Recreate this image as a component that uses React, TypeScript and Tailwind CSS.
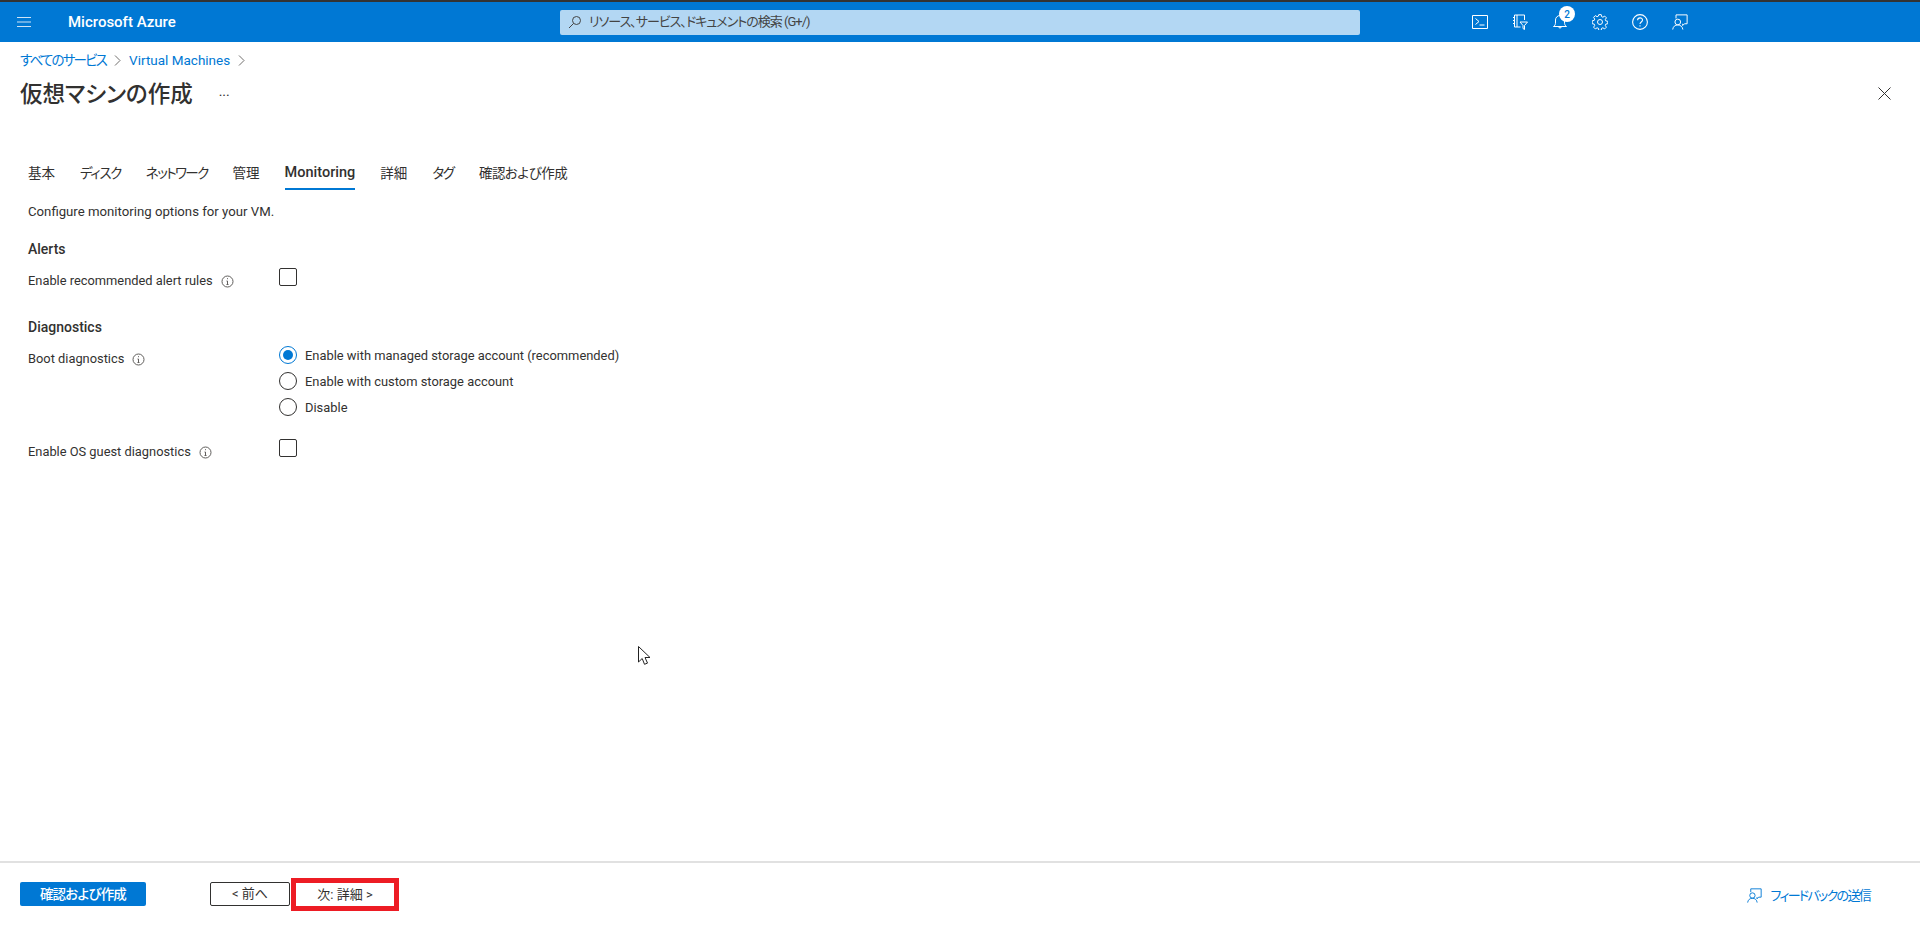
import React from "react";

const font = { fontFamily: '"Roboto", "Noto Sans CJK JP", sans-serif' };

function Info() {
  return (
    <svg width="13" height="13" viewBox="0 0 13 13" fill="none" stroke="#605e5c" strokeWidth="1">
      <circle cx="6.5" cy="6.5" r="5.5" />
      <path d="M6.5 6v3.5M5.5 9.5h2M5.5 6h1" />
      <path d="M6.5 3.2v1" />
    </svg>
  );
}

function Feedback({ color, size }: { color: string; size: number }) {
  return (
    <svg width={size} height={size} viewBox="0 0 18 18" fill="none" stroke={color} strokeWidth="1.1">
      <path d="M4.5 5V1h12.5v10h-3l-2 2v-2" />
      <circle cx="6.5" cy="9" r="3.2" />
      <path d="M0.8 17.5c.3-3.2 2.6-5.2 5.7-5.2s5.400 2 5.700 5.200" />
    </svg>
  );
}

function Checkbox() {
  return <div className="-ml-[1px] h-[18px] w-[18px] rounded-[2px] border border-[#323130] bg-white" />;
}

function Radio({ checked, label }: { checked?: boolean; label: string }) {
  return (
    <div className="flex h-[18px] items-center gap-[8px]">
      <div
        className={
          checked
            ? "flex h-[18px] w-[18px] items-center justify-center rounded-full border border-[#0078d4]"
            : "flex h-[18px] w-[18px] items-center justify-center rounded-full border border-[#323130]"
        }
      >
        {checked && <div className="h-[10px] w-[10px] rounded-full bg-[#0078d4]" />}
      </div>
      <span className="mt-[2px] whitespace-nowrap text-[12.9px] leading-5 text-[#323130]">{label}</span>
    </div>
  );
}

function Label({ text }: { text: string }) {
  return (
    <div className="flex h-5 w-[252px] items-center gap-[8px] text-[12.85px] leading-5 text-[#323130]">
      <span className="whitespace-nowrap">{text}</span>
      <Info />
    </div>
  );
}

const tabs = [
  { t: "基本", c: "whitespace-nowrap pb-[6px] text-[13.5px] leading-5 text-[#323130]" },
  { t: "ディスク", c: "whitespace-nowrap pb-[6px] text-[13.5px] leading-5 text-[#323130] tracking-[-1.4px]" },
  { t: "ネットワーク", c: "whitespace-nowrap pb-[6px] text-[13.5px] leading-5 text-[#323130] tracking-[-1.6px]" },
  { t: "管理", c: "whitespace-nowrap pb-[6px] text-[13.5px] leading-5 text-[#323130]" },
  { t: "Monitoring", c: "whitespace-nowrap border-b-2 border-[#0078d4] pb-[5px] text-[14.5px] font-medium leading-5 text-[#323130]" },
  { t: "詳細", c: "whitespace-nowrap pb-[6px] text-[13.5px] leading-5 text-[#323130]" },
  { t: "タグ", c: "whitespace-nowrap pb-[6px] text-[13.5px] leading-5 text-[#323130] tracking-[-1.2px]" },
  { t: "確認および作成", c: "whitespace-nowrap pb-[6px] text-[13.5px] leading-5 text-[#323130] tracking-[-0.5px]" },
];

export default function App() {
  return (
    <div className="flex h-[931px] w-[1920px] flex-col overflow-hidden bg-white [font-feature-settings:'palt']" style={font}>
      <div className="h-[2px] bg-[#333333]" />
      <header className="flex h-10 items-center bg-[#0078d4] text-white">
        <svg className="ml-[17px]" width="14" height="12" viewBox="0 0 14 12" fill="none" stroke="#cfe4f6" strokeWidth="1.2">
          <path d="M0 1.500h14M0 6h14M0 10.500h14" />
        </svg>
        <span className="ml-[37px] w-[492px] whitespace-nowrap text-[15px] font-medium leading-5">Microsoft Azure</span>
        <div className="flex h-[25px] w-[800px] items-center rounded-[2px] bg-[#b3d7f3] pl-2 text-[13px] text-[#444]">
          <svg width="14" height="14" viewBox="0 0 14 14" fill="none" stroke="#444" strokeWidth="1">
            <circle cx="8.500" cy="5.500" r="4" />
            <path d="M5.500 8.500 1 13" />
          </svg>
          <span className="ml-[7px] whitespace-nowrap tracking-[-1px]">リソース、サービス、ドキュメントの検索 (G+/)</span>
        </div>
        <div className="ml-[112px] flex items-center gap-[24px]">
          <svg width="16" height="16" viewBox="0 0 16 16" fill="none" stroke="white" strokeWidth="1">
            <path d="M.5 1.500h15v13H.5z" />
            <path d="M3.500 4.500l3.500 3-3.500 3M7.500 11h5" />
          </svg>
          <svg width="16" height="16" viewBox="0 0 16 16" fill="none" stroke="white" strokeWidth="1">
            <path d="M2.500 13V1h10v5M2.500 13h6M5 1v12M1 3.500h1.500M1 6.500h1.500M1 9.500h1.500" />
            <path d="M8 8h7.500l-3 3.500v4l-1.500-1v-3z" />
          </svg>
          <div className="relative h-4 w-4">
            <svg width="16" height="16" viewBox="0 0 16 16" fill="none" stroke="white" strokeWidth="1">
              <path d="M1.500 12.500h13c-1.500-1-2-2-2-4.500V6a4.500 4.500 0 0 0-9 0v2c0 2.500-.5 3.500-2 4.500zM6.500 12.500c0 2 3 2 3 0" />
            </svg>
            <div className="absolute left-[-1px] top-[-8px] ml-[8px] flex h-4 w-4 items-center justify-center rounded-full bg-white text-[10px] font-medium text-[#0078d4]">
              2
            </div>
          </div>
          <svg width="16" height="16" viewBox="0 0 16 16" fill="none" stroke="white" strokeWidth="1">
            <circle cx="8" cy="8" r="2.500" />
            <path d="M6.800 .6h2.400l.4 2 1.300.6 1.800-1.100 1.700 1.700-1.100 1.800.5 1.300 2 .4v2.400l-2 .4-.5 1.300 1.100 1.800-1.700 1.700-1.800-1.100-1.300.5-.4 2.100H6.800l-.4-2.100-1.300-.5-1.800 1.100-1.700-1.700 1.100-1.800-.5-1.300-2-.4V6.800l2-.4.500-1.300-1.100-1.800 1.700-1.700 1.800 1.100 1.300-.6z" />
          </svg>
          <svg width="16" height="16" viewBox="0 0 16 16" fill="none" stroke="white" strokeWidth="1.100">
            <circle cx="8" cy="8" r="7.400" />
            <path d="M5.600 6.200c0-3.200 4.900-3.100 4.900-.1 0 1.900-2.500 1.900-2.500 4" />
            <path d="M8 11.300v1.300" />
          </svg>
          <Feedback color="white" size={16} />
        </div>
      </header>

      <main className="flex-1 pl-5 pr-[28px]">
        <div className="mt-2 flex h-5 items-center text-[13.5px] text-[#0078d4]">
          <span className="whitespace-nowrap tracking-[-1.8px]">すべてのサービス</span>
          <svg className="mx-[8px]" width="7" height="11" viewBox="0 0 7 11" fill="none" stroke="#605e5c" strokeWidth="0.900">
            <path d="M1 .5l5 5-5 5" />
          </svg>
          <span className="whitespace-nowrap">Virtual Machines</span>
          <svg className="ml-[8px]" width="7" height="11" viewBox="0 0 7 11" fill="none" stroke="#605e5c" strokeWidth="0.900">
            <path d="M1 .5l5 5-5 5" />
          </svg>
        </div>

        <div className="mt-[7px] flex h-8 items-center">
          <h1 className="mt-[2px] whitespace-nowrap text-[22.5px] font-medium leading-8 text-[#323130]">仮想マシンの作成</h1>
          <span className="-mt-[5px] ml-[26px] text-[14px] leading-8 text-[#323130]">...</span>
          <svg className="ml-auto mr-[1px]" width="13" height="13" viewBox="0 0 13 13" fill="none" stroke="#323130" strokeWidth="1">
            <path d="M.5 .5l12 12M12.500 .5l-12 12" />
          </svg>
        </div>

        <div className="pl-2">
          <div className="mt-[54px] flex gap-[25px]">
            {tabs.map((x) => (
              <div key={x.t} className={x.c}>
                {x.t}
              </div>
            ))}
          </div>

          <p className="mt-[12px] text-[13.2px] leading-5 text-[#323130]">Configure monitoring options for your VM.</p>

          <h2 className="mt-[17px] text-[14px] font-medium leading-5 text-[#323130]">Alerts</h2>
          <div className="mt-[9px] flex">
            <div className="pt-[3px]">
              <Label text="Enable recommended alert rules" />
            </div>
            <Checkbox />
          </div>

          <h2 className="mt-[26px] text-[14px] font-medium leading-5 text-[#323130]">Diagnostics</h2>
          <div className="mt-[9px] flex">
            <div className="pt-[3px]">
              <Label text="Boot diagnostics" />
            </div>
            <div className="-ml-[1px] flex flex-col gap-2">
              <Radio checked label="Enable with managed storage account (recommended)" />
              <Radio label="Enable with custom storage account" />
              <Radio label="Disable" />
            </div>
          </div>

          <div className="mt-[23px] flex">
            <div className="pt-[3px]">
              <Label text="Enable OS guest diagnostics" />
            </div>
            <Checkbox />
          </div>
        </div>

        <svg className="absolute left-[638px] top-[646px]" width="13" height="20" viewBox="0 0 13 20" fill="white" stroke="#222" strokeWidth="1">
          <path d="M.5 .5v15.500l3.700-3.500 2.300 5.800 3-1.200-2.500-5.600h5z" />
        </svg>
      </main>

      <footer className="flex h-[70px] items-start border-t-2 border-[#e1e1e1] pl-5 pr-[50px] pt-[19px]">
        <button className="h-6 w-[126px] rounded-[2px] bg-[#0078d4] text-[13.5px] font-medium leading-6 tracking-[-0.8px] text-white">確認および作成</button>
        <button className="ml-[64px] h-6 w-[80px] rounded-[2px] border border-[#323130] bg-white text-[13px] leading-5 text-[#323130]">&lt; 前へ</button>
        <button className="-mt-1 ml-[1px] h-[33px] w-[108px] border-[5px] border-[#ed1c24] bg-white text-[13px] leading-5 text-[#323130]">次: 詳細 &gt;</button>
        <div className="ml-auto mt-[4px] flex items-center gap-[9px] text-[13px] text-[#0078d4]">
          <Feedback color="#0078d4" size={15} />
          <span className="whitespace-nowrap tracking-[-1.7px]">フィードバックの送信</span>
        </div>
      </footer>
    </div>
  );
}
